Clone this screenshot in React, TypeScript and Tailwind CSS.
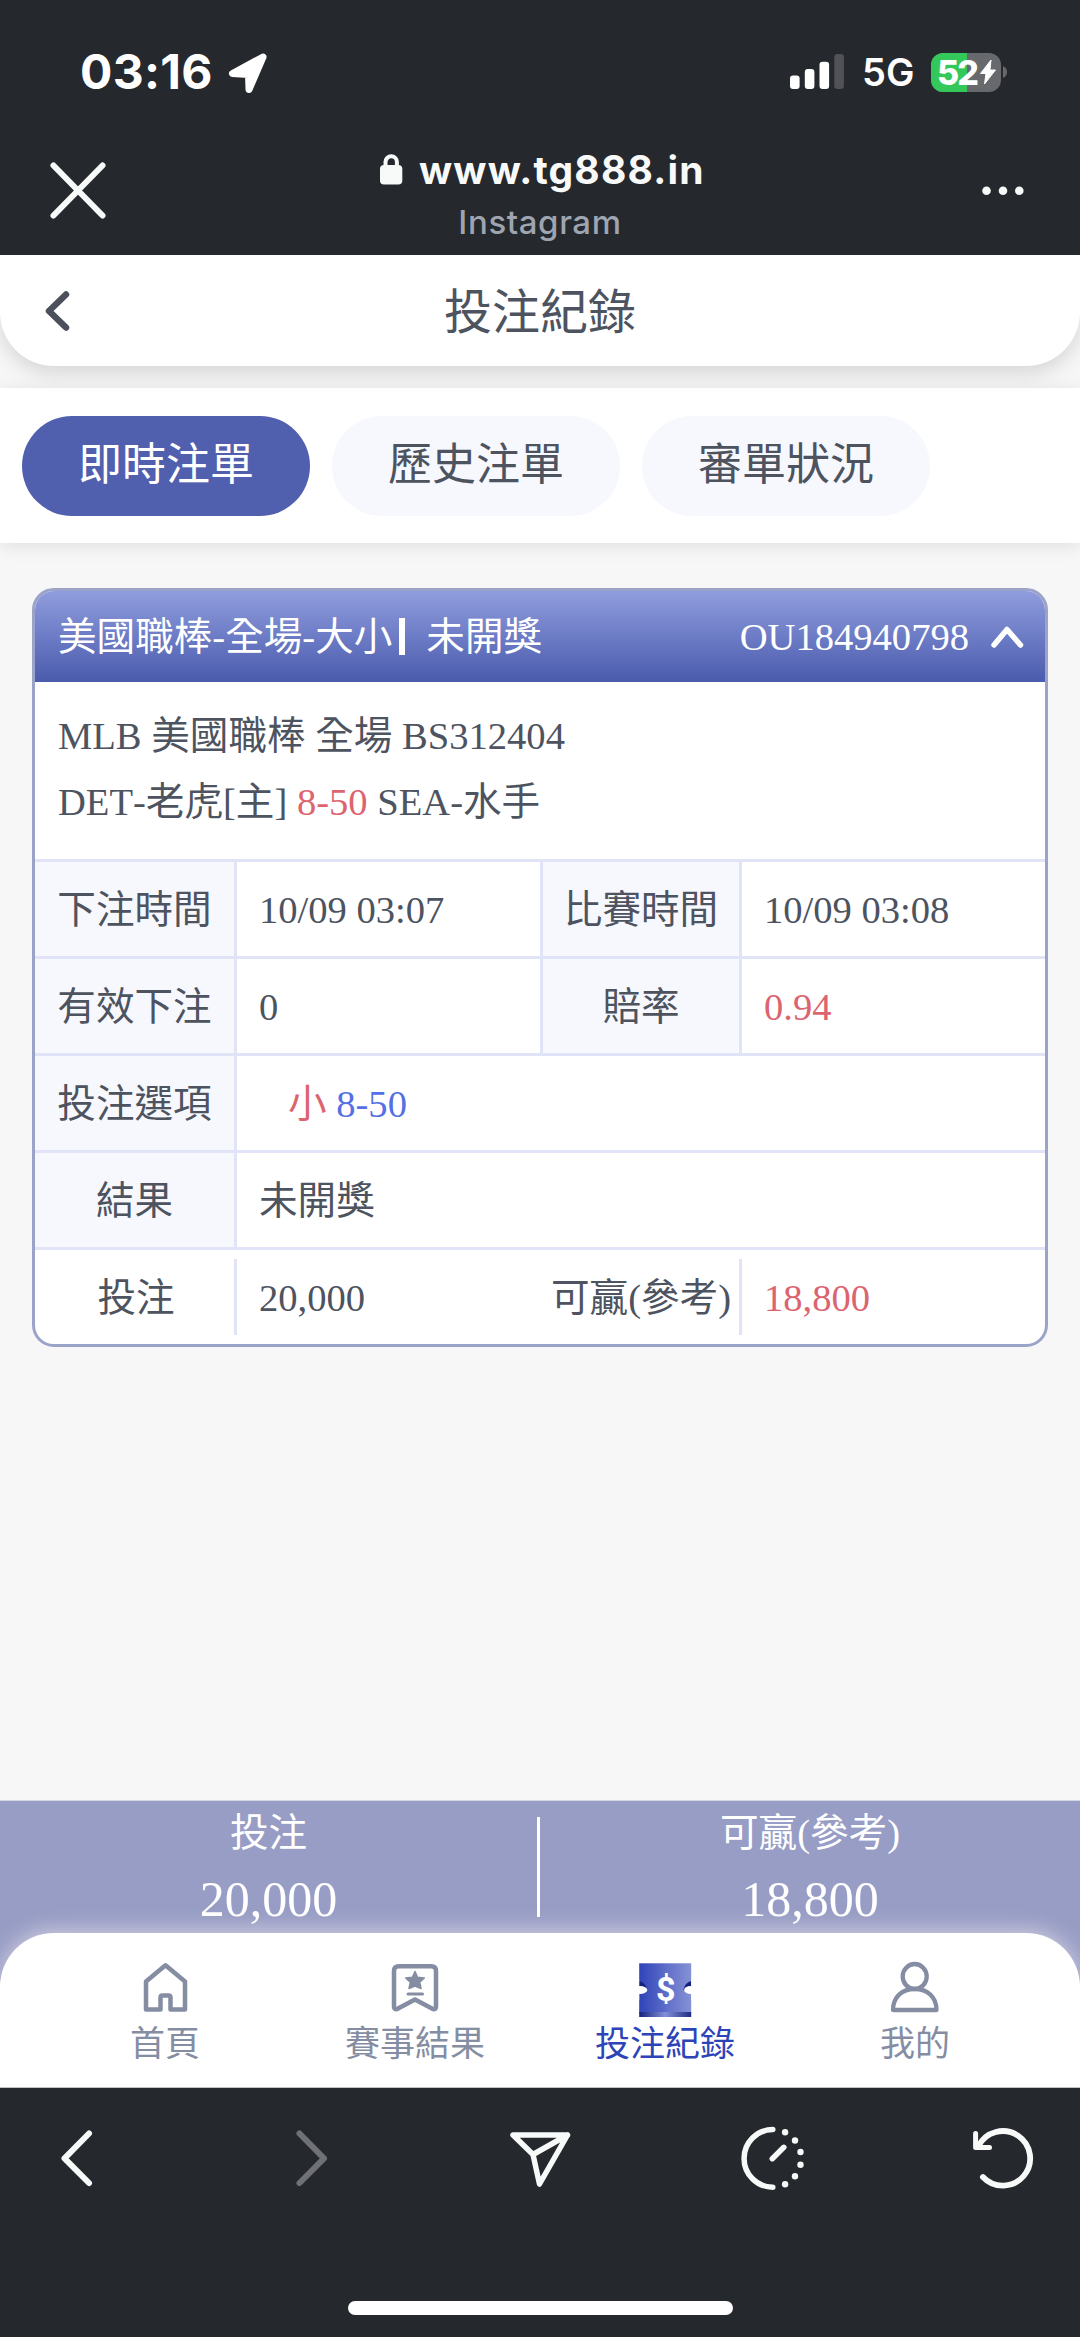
import type { ReactNode } from "react";

const SERIF = "font-['Liberation_Serif','Noto_Sans_CJK_TC',serif]";

function StatusBar() {
  return (
    <div className="flex h-[144px] items-start justify-between pl-[80px] pr-[72px] pt-[48px] font-['Inter','Liberation_Sans',sans-serif] text-white">
      <div className="flex h-[48px] items-center">
        <span className="w-[146px] whitespace-nowrap text-[48px] font-bold leading-[48px] tracking-[0.3px]">03:16</span>
        <svg className="h-[48px] w-[44px]" viewBox="226 48 44 48" fill="white">
          <path d="M263 57 L232.500 73.500 L248.500 74.500 L249 89.500 Z" stroke="white" strokeWidth="7" strokeLinejoin="round" />
        </svg>
      </div>
      <div className="flex h-[48px] items-center">
        <svg className="h-[48px] w-[56px]" viewBox="789 48 56 48" fill="white">
          <rect x="790" y="75.500" width="9.600" height="13.500" rx="3" />
          <rect x="804.800" y="69" width="9.600" height="20" rx="3" />
          <rect x="819.500" y="61.700" width="9.600" height="27.300" rx="3" />
          <rect x="834.300" y="54" width="9.600" height="35" rx="3" fill="#505257" />
        </svg>
        <span className="ml-[17px] w-[69px] whitespace-nowrap text-[38px] font-semibold leading-[48px]">5G</span>
        <div className="relative flex h-[39px] w-[70px] items-center overflow-hidden rounded-[12px] bg-[#67696d]">
          <div className="absolute inset-y-0 left-0 w-[36px] bg-[#34c759]" />
          <span className="relative ml-[6px] w-[42px] whitespace-nowrap text-[34px] font-extrabold leading-[39px] tracking-[-2px]">52</span>
          <svg className="relative h-[28px] w-[18px]" viewBox="0 0 18 28" fill="white">
            <path d="M12 2 L1.500 15.500 H7 L5.500 26 L16.500 12 H11 Z" stroke="white" strokeWidth="1" strokeLinejoin="round" />
          </svg>
        </div>
        <svg className="h-[12px] w-[7px]" viewBox="0 0 7 12" fill="#67696d">
          <path d="M2 0 Q6 2 6 6 Q6 10 2 12 Z" />
        </svg>
      </div>
    </div>
  );
}

function BrowserBar() {
  return (
    <div className="flex h-[111px] items-start justify-between px-[46px] font-['Inter','Liberation_Sans',sans-serif]">
      <svg className="h-[90px] w-[64px]" viewBox="46 144 64 90" stroke="#f8faf9" strokeWidth="6" strokeLinecap="round">
        <path d="M53.500 165.500 L102.500 215.500 M102.500 165.500 L53.500 215.500" />
      </svg>
      <div className="flex flex-col items-center pt-[2px]">
        <div className="flex items-center">
          <svg className="h-[48px] w-[24px]" viewBox="379 146 24 48">
            <path d="M385.500 167 V162 a5.700 5.700 0 0 1 11.400 0 V167" fill="none" stroke="#f8faf9" strokeWidth="4" />
            <rect x="380" y="165" width="22.300" height="19.600" rx="4" fill="#f8faf9" />
          </svg>
          <span className="ml-[16px] w-[282px] whitespace-nowrap text-[39px] font-bold leading-[48px] tracking-[1.2px] text-[#f8faf9]">www.tg888.in</span>
        </div>
        <span className="mt-[6px] text-[33px] font-medium leading-[44px] tracking-[0.6px] text-[#9ea4b0]">Instagram</span>
      </div>
      <svg className="h-[90px] w-[64px]" viewBox="970 144 64 90" fill="#f8faf9">
        <circle cx="986.500" cy="190.700" r="4.300" />
        <circle cx="1003" cy="190.700" r="4.300" />
        <circle cx="1019.300" cy="190.700" r="4.300" />
      </svg>
    </div>
  );
}

function PageHeader() {
  return (
    <div className="relative flex h-[111px] items-center rounded-b-[54px] bg-white px-[36px] shadow-[0_8px_20px_rgba(0,0,0,0.13)]">
      <svg className="h-[60px] w-[44px]" viewBox="36 281 44 60" fill="none" stroke="#4b505c" strokeWidth="6.500" strokeLinecap="round" strokeLinejoin="round">
        <path d="M66 294.500 L49 311 L66 327.500" />
      </svg>
      <h1 className="mr-[44px] flex-1 pt-[5px] text-center text-[48px] leading-[64px] text-[#4d535f]">投注紀錄</h1>
    </div>
  );
}

const tabs = ["即時注單", "歷史注單", "審單狀況"];

function Tabs() {
  return (
    <div className="mt-[22px] flex h-[155px] items-center gap-[22px] bg-white px-[22px] shadow-[0_3px_18px_rgba(0,0,0,0.10)]">
      {tabs.map((t, i) => (
        <div
          key={t}
          className={
            i === 0
              ? "flex h-[100px] w-[288px] items-center justify-center rounded-full bg-[#5160ae] pt-[1px] text-[44px] leading-none text-white"
              : "flex h-[100px] w-[288px] items-center justify-center rounded-full bg-[#f6f8fd] pt-[1px] text-[44px] leading-none text-[#4d535f]"
          }
        >
          {t}
        </div>
      ))}
    </div>
  );
}

function Label({ children }: { children: ReactNode }) {
  return <div className="flex items-center justify-center whitespace-nowrap border-r-[3px] border-[#e0e4f6] bg-[#f6f8fd] pt-[2px]">{children}</div>;
}

function Value({ children, className = "" }: { children: ReactNode; className?: string }) {
  return <div className={"flex items-center whitespace-pre pl-[22px] pt-[1px] " + className}>{children}</div>;
}

function BetCard() {
  return (
    <div className="mx-[32px] mt-[45px] h-[759px] overflow-hidden rounded-[22px] border-[3px] border-[#9ba3c9] bg-white text-[38.6px] leading-[66px] text-[#4d535f] [font-kerning:none]">
      <div className="flex h-[91px] items-center bg-linear-to-b from-[#909ddd] to-[#4b5bad] pl-[23px] pr-[18px] text-white">
        <span className="whitespace-nowrap">美國職棒-全場-大小</span>
        <span className="ml-[7px] h-[37px] w-[6px] bg-white" />
        <span className="ml-[21px]">未開獎</span>
        <span className="ml-auto">OU184940798</span>
        <svg className="ml-[18px] h-[40px] w-[40px]" viewBox="986 618 40 40" fill="none" stroke="white" strokeWidth="5.500" strokeLinecap="round" strokeLinejoin="round">
          <path d="M993 646 L1006 630.500 L1019.500 646" />
        </svg>
      </div>
      <div className="h-[177px] pl-[23px] pt-[21px]">
        <p className="whitespace-nowrap">MLB 美國職棒 全場 BS312404</p>
        <p className="whitespace-nowrap">
          DET-老虎[主] <span className="text-[#dc6470]">8-50</span> SEA-水手
        </p>
      </div>
      <div className="grid h-[97px] grid-cols-[202px_306px_199px_1fr] border-t-[3px] border-[#e0e4f6]">
        <Label>下注時間</Label>
        <Value className="border-r-[3px] border-[#e0e4f6]">10/09 03:07</Value>
        <Label>比賽時間</Label>
        <Value>10/09 03:08</Value>
      </div>
      <div className="grid h-[97px] grid-cols-[202px_306px_199px_1fr] border-t-[3px] border-[#e0e4f6]">
        <Label>有效下注</Label>
        <Value className="border-r-[3px] border-[#e0e4f6]">0</Value>
        <Label>賠率</Label>
        <Value className="text-[#dc6470]">0.94</Value>
      </div>
      <div className="grid h-[97px] grid-cols-[202px_1fr] border-t-[3px] border-[#e0e4f6]">
        <Label>投注選項</Label>
        <Value>
          <span className="ml-[29px] text-[#dc6470]">小 </span>
          <span className="text-[#556fe5]">8-50</span>
        </Value>
      </div>
      <div className="grid h-[97px] grid-cols-[202px_1fr] border-t-[3px] border-[#e0e4f6]">
        <Label>結果</Label>
        <Value>未開獎</Value>
      </div>
      <div className="grid h-[97px] grid-cols-[202px_306px_199px_1fr] border-t-[3px] border-[#e0e4f6] py-[9px]">
        <div className="flex items-center justify-center border-r-[3px] border-[#e0e4f6] pl-[3px] pt-[1px]">投注</div>
        <Value>20,000</Value>
        <div className="flex items-center justify-center whitespace-nowrap border-r-[3px] border-[#e0e4f6] pt-[1px]">可贏(參考)</div>
        <Value className="text-[#dc6470]">18,800</Value>
      </div>
    </div>
  );
}

function Summary() {
  return (
    <div className="relative mt-auto flex h-[190px] shrink-0 items-start border-t border-[#d5d8e4] bg-[#979dc5] text-white">
      <div className="flex w-[537px] flex-col items-center pt-[9px]">
        <span className="text-[38.6px] leading-[46px]">投注</span>
        <span className="mt-[13px] text-[50px] leading-[60px]">20,000</span>
      </div>
      <span className="mt-[16px] h-[100px] w-[3px] bg-white" />
      <div className="flex w-[540px] flex-col items-center pt-[9px]">
        <span className="text-[38.6px] leading-[46px]">可贏(參考)</span>
        <span className="mt-[13px] text-[50px] leading-[60px]">18,800</span>
      </div>
    </div>
  );
}

function HomeIcon() {
  return (
    <svg className="h-[60px] w-[60px]" viewBox="135 1958 60 60" fill="none" stroke="#858da3" strokeWidth="4.500" strokeLinejoin="round">
      <path d="M146 2009.500 V1981.500 L165.500 1965.300 L185 1981.500 V2009.500 H170.500 V1997.500 Q170.500 1995.500 168.500 1995.500 H162.500 Q160.500 1995.500 160.500 1997.500 V2009.500 Z" />
    </svg>
  );
}

function ResultIcon() {
  return (
    <svg className="h-[60px] w-[60px]" viewBox="385 1958 60 60" fill="none" stroke="#858da3" strokeWidth="4.500" strokeLinejoin="round">
      <path d="M399 1966.300 H431 Q436 1966.300 436 1971 V2006 Q436 2011 431.500 2008.300 L415 1999.500 L398.500 2008.300 Q394 2011 394 2006 V1971 Q394 1966.300 399 1966.300 Z" />
      <path d="M415 1971.500 L417.600 1977.300 L424.300 1978 L419.700 1982.300 L421 1988.500 L415 1986 L409 1988.500 L410.300 1982.300 L405.700 1978 L412.400 1977.300 Z" fill="#858da3" strokeWidth="1.500" />
      <path d="M408 1994 H422.500" strokeWidth="3" strokeLinecap="round" />
    </svg>
  );
}

function TicketIcon() {
  return (
    <svg className="h-[60px] w-[60px]" viewBox="635 1958 60 60">
      <defs>
        <linearGradient id="face" x1="0" x2="1" y1="0" y2="0">
          <stop offset="0" stopColor="#2e43b8" />
          <stop offset="0.600" stopColor="#6674cb" />
          <stop offset="1" stopColor="#8591d5" />
        </linearGradient>
        <linearGradient id="edge" x1="0" x2="1" y1="0" y2="0">
          <stop offset="0" stopColor="#16227c" />
          <stop offset="0.500" stopColor="#8390d8" />
          <stop offset="1" stopColor="#1f2c82" />
        </linearGradient>
      </defs>
      <rect x="639.200" y="1963.300" width="52" height="50" fill="url(#face)" />
      <rect x="639.200" y="2012" width="52" height="5" fill="url(#edge)" />
      <path d="M639.200 1981 Q646 1983 647 1990 H639.200 Z M691.200 1981 Q684.500 1983 683.500 1990 H691.200 Z" fill="#16227c" />
      <ellipse cx="640" cy="1990" rx="7.300" ry="4" fill="white" />
      <ellipse cx="690.600" cy="1990" rx="6.500" ry="4" fill="white" />
      <rect x="635" y="1980" width="4.200" height="20" fill="white" />
      <rect x="691.200" y="1980" width="4" height="20" fill="white" />
      <text x="665.800" y="2000.500" textAnchor="middle" fontFamily="Roboto" fontWeight="700" fontSize="34" fill="white">$</text>
    </svg>
  );
}

function UserIcon() {
  return (
    <svg className="h-[60px] w-[60px]" viewBox="885 1958 60 60" fill="none" stroke="#858da3" strokeWidth="4.300" strokeLinejoin="round">
      <ellipse cx="914.700" cy="1976.500" rx="12" ry="12.500" />
      <path d="M893 2010 C893 1997 902 1989 914.700 1989 S936.500 1997 936.500 2010 Z" />
    </svg>
  );
}

const navItems = [
  { label: "首頁", icon: <HomeIcon />, active: false },
  { label: "賽事結果", icon: <ResultIcon />, active: false },
  { label: "投注紀錄", icon: <TicketIcon />, active: true },
  { label: "我的", icon: <UserIcon />, active: false },
];

function NavBar() {
  return (
    <div className="relative -mt-[57px] flex h-[155px] shrink-0 rounded-t-[54px] border-b border-[#bfc2c6] bg-white px-[40px] pt-[25px] shadow-[0_-4px_20px_rgba(255,246,246,0.5)]">
      {navItems.map((n) => (
        <div key={n.label} className="flex w-[250px] flex-col items-center gap-[3px]">
          {n.icon}
          <span className={n.active ? "text-[35px] leading-[48px] text-[#2d44b9]" : "text-[35px] leading-[48px] text-[#858da3]"}>{n.label}</span>
        </div>
      ))}
    </div>
  );
}

function ToolBar() {
  return (
    <div className="relative z-10 flex h-[249px] shrink-0 flex-col items-center bg-[#25282d]">
      <div className="flex w-full justify-between px-[37px] pt-[30px]">
        <svg className="h-[80px] w-[80px]" viewBox="37 2118 80 80" fill="none" stroke="#f8faf9" strokeWidth="6" strokeLinecap="round" strokeLinejoin="round">
          <path d="M89 2133.500 L64.500 2158.300 L89 2183" />
        </svg>
        <svg className="h-[80px] w-[80px]" viewBox="268.500 2118 80 80" fill="none" stroke="#707176" strokeWidth="6" strokeLinecap="round" strokeLinejoin="round">
          <path d="M299 2133.500 L323.500 2158.300 L299 2183" />
        </svg>
        <svg className="h-[80px] w-[80px]" viewBox="500 2118 80 80" fill="none" stroke="#f8faf9" strokeWidth="5.500" strokeLinecap="round" strokeLinejoin="round">
          <path d="M513 2135 H567.500 L539.500 2184 L533 2154.500 Z M567.500 2135 L533 2154.500" />
        </svg>
        <svg className="h-[80px] w-[80px]" viewBox="731.500 2118 80 80" fill="none" stroke="#f8faf9" strokeWidth="5.500" strokeLinecap="round">
          <path d="M772.300 2129.600 A28.800 28.800 0 0 0 772.300 2187.200" />
          <path d="M771.800 2158.700 L783.300 2147.300" />
          <g fill="#f8faf9" stroke="none">
            <circle cx="784.600" cy="2132.300" r="3.200" />
            <circle cx="794.500" cy="2140.500" r="3.200" />
            <circle cx="800" cy="2152" r="3.200" />
            <circle cx="800" cy="2164.700" r="3.200" />
            <circle cx="794.500" cy="2176.200" r="3.200" />
            <circle cx="784.600" cy="2184.300" r="3.200" />
          </g>
        </svg>
        <svg className="h-[80px] w-[80px]" viewBox="963 2118 80 80" fill="none" stroke="#f8faf9" strokeWidth="5.800" strokeLinecap="round" strokeLinejoin="round">
          <path d="M982.900 2177 A27.300 27.300 0 1 0 978.500 2146" />
          <path d="M975.600 2133.500 V2147.500 H989.500" strokeWidth="5" />
        </svg>
      </div>
      <div className="mt-[103px] h-[14px] w-[385px] rounded-full bg-white" />
    </div>
  );
}

export default function App() {
  return (
    <div className={"flex h-[2337px] w-[1080px] flex-col overflow-hidden bg-[#f7f7f7] " + SERIF}>
      <div className="relative z-10 h-[255px] shrink-0 bg-[#25282d]">
        <StatusBar />
        <BrowserBar />
      </div>
      <PageHeader />
      <Tabs />
      <BetCard />
      <Summary />
      <NavBar />
      <ToolBar />
    </div>
  );
}
